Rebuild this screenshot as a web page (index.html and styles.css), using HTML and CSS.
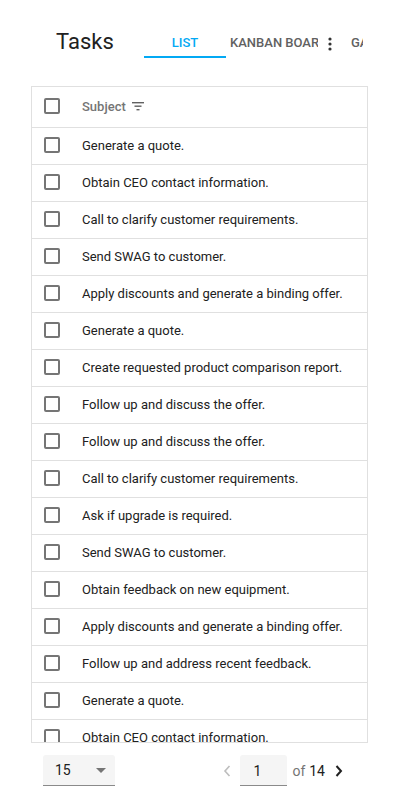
FILE: index.html
```html
<!DOCTYPE html>
<html>
<head>
<meta charset="utf-8">
<link rel="stylesheet" href="styles.css">
</head>
<body>
<div class="page">
  <header class="toolbar">
    <h1 class="title">Tasks</h1>
    <nav class="tabs">
      <div class="tab active">LIST</div>
      <div class="tab clipped">KANBAN BOARD</div>
      <div class="kebab"><svg width="4" height="14" viewBox="0 0 4 14"><circle cx="2" cy="2" r="1.6" fill="#333"/><circle cx="2" cy="7" r="1.6" fill="#333"/><circle cx="2" cy="12" r="1.6" fill="#333"/></svg></div>
      <div class="tab clipped2">GANTT</div>
    </nav>
  </header>
  <div class="grid">
    <div class="row head">
      <span class="cb"></span>
      <span class="subject">Subject</span>
      <svg class="filter" width="12" height="10" viewBox="0 0 12 10"><rect x="0" y="1" width="12" height="1.4" fill="#616161"/><rect x="2.5" y="4.5" width="7" height="1.4" fill="#616161"/><rect x="4.5" y="8" width="3" height="1.4" fill="#616161"/></svg>
    </div>
    <div class="body">
      <div class="row"><span class="cb"></span><span class="txt">Generate a quote.</span></div>
      <div class="row"><span class="cb"></span><span class="txt">Obtain CEO contact information.</span></div>
      <div class="row"><span class="cb"></span><span class="txt">Call to clarify customer requirements.</span></div>
      <div class="row"><span class="cb"></span><span class="txt">Send SWAG to customer.</span></div>
      <div class="row"><span class="cb"></span><span class="txt">Apply discounts and generate a binding offer.</span></div>
      <div class="row"><span class="cb"></span><span class="txt">Generate a quote.</span></div>
      <div class="row"><span class="cb"></span><span class="txt">Create requested product comparison report.</span></div>
      <div class="row"><span class="cb"></span><span class="txt">Follow up and discuss the offer.</span></div>
      <div class="row"><span class="cb"></span><span class="txt">Follow up and discuss the offer.</span></div>
      <div class="row"><span class="cb"></span><span class="txt">Call to clarify customer requirements.</span></div>
      <div class="row"><span class="cb"></span><span class="txt">Ask if upgrade is required.</span></div>
      <div class="row"><span class="cb"></span><span class="txt">Send SWAG to customer.</span></div>
      <div class="row"><span class="cb"></span><span class="txt">Obtain feedback on new equipment.</span></div>
      <div class="row"><span class="cb"></span><span class="txt">Apply discounts and generate a binding offer.</span></div>
      <div class="row"><span class="cb"></span><span class="txt">Follow up and address recent feedback.</span></div>
      <div class="row"><span class="cb"></span><span class="txt">Generate a quote.</span></div>
      <div class="row"><span class="cb"></span><span class="txt">Obtain CEO contact information.</span></div>
    </div>
  </div>
  <footer class="pager">
    <div class="size">
      <span>15</span>
      <svg width="10" height="5" viewBox="0 0 10 5"><path d="M0 0 L10 0 L5 5 Z" fill="#757575"/></svg>
    </div>
    <div class="nav">
      <svg class="prev" width="8" height="12" viewBox="0 0 8 12"><path d="M6.5 1 L2 6 L6.5 11" fill="none" stroke="#bdbdbd" stroke-width="1.6"/></svg>
      <div class="page-input">1</div>
      <span class="of">of</span>
      <span class="total">14</span>
      <svg class="next" width="8" height="12" viewBox="0 0 8 12"><path d="M1.5 1 L6 6 L1.5 11" fill="none" stroke="#212121" stroke-width="2"/></svg>
    </div>
  </footer>
</div>
</body>
</html>
```
FILE: styles.css
```css
* { box-sizing: border-box; }
html, body { margin: 0; padding: 0; background: #fff; }
body { font-family: Roboto, "Noto Sans", sans-serif; color: #212121; }
.page { width: 400px; height: 800px; overflow: hidden; }
.toolbar { display: flex; align-items: flex-start; height: 86px; padding-top: 24px; }
.title { margin: 0 0 0 56px; font-size: 22px; font-weight: 400; line-height: 36px; color: #212121; width: 88px; }
.tabs { display: flex; align-items: flex-start; }
.tab { font-size: 13px; font-weight: 500; line-height: 16px; padding-top: 11px; height: 34px; color: #616161; white-space: nowrap; overflow: hidden; }
.tab.active { width: 82px; text-align: center; color: #03a9f4; border-bottom: 2px solid #03a9f4; }
.tab.clipped { margin-left: 4px; width: 88px; }
.kebab { padding: 12px 0 0 10px; width: 33px; }
.tab.clipped2 { width: 12px; }
.grid { margin-left: 31px; width: 337px; height: 657px; border: 1px solid #e0e0e0; overflow: hidden; display: flex; flex-direction: column; }
.body { overflow: hidden; flex: 1; }
.row { display: flex; align-items: center; height: 37px; border-bottom: 1px solid #e0e0e0; padding: 0 0 2px 12px; font-size: 13px; }
.row.head { height: 41px; flex: none; }
.cb { width: 16px; height: 16px; border: 2px solid #757575; border-radius: 2px; flex: none; margin-right: 22px; }
.txt { color: #212121; white-space: nowrap; }
.subject { font-weight: 500; color: #757575; }
.filter { margin-left: 6px; }
.pager { display: flex; justify-content: space-between; align-items: center; padding: 12px 0 0 43px; }
.size { width: 72px; height: 31px; background: #f5f5f5; border-bottom: 1px solid #8a8a8a; border-radius: 3px 3px 0 0; display: flex; align-items: center; justify-content: space-between; padding: 0 9px 0 12px; font-size: 14px; }
.nav { display: flex; align-items: center; margin-right: 57px; font-size: 14px; }
.prev { margin-right: 9px; }
.page-input { width: 47px; height: 31px; background: #f5f5f5; border-bottom: 1px solid #8a8a8a; border-radius: 3px 3px 0 0; padding: 8px 0 0 13px; }
.of { margin-left: 5px; color: #757575; }
.total { margin-left: 4px; }
.next { margin-left: 10px; }
```
